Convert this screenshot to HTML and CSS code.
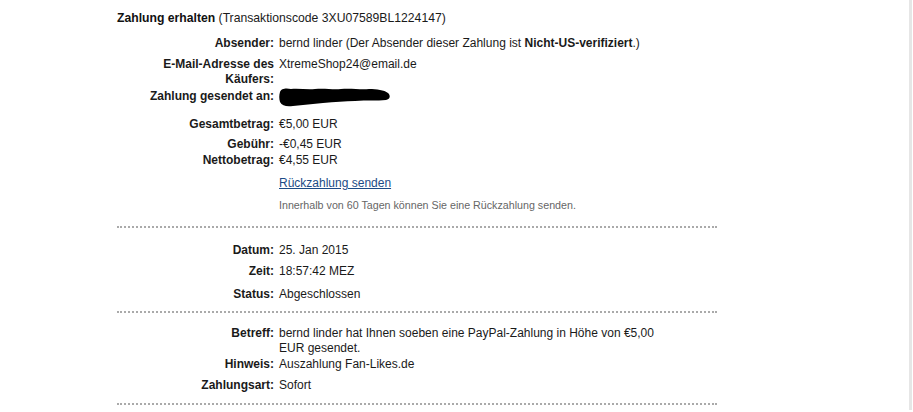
FILE: index.html
```html
<!DOCTYPE html>
<html lang="de">
<head>
<meta charset="utf-8">
<title>Zahlung erhalten</title>
<link rel="stylesheet" href="styles.css">
</head>
<body>
<div class="page">
  <div class="content">
    <h1 class="title"><b>Zahlung erhalten</b> (Transaktionscode 3XU07589BL1224147)</h1>

    <div class="grid sec1">
      <div class="lbl">Absender:</div>
      <div class="val">bernd linder (Der Absender dieser Zahlung ist <b>Nicht-US-verifiziert</b>.)</div>

      <div class="lbl r-mail">E-Mail-Adresse des Käufers:</div>
      <div class="val r-mail">XtremeShop24@email.de</div>

      <div class="lbl r-sent">Zahlung gesendet an:</div>
      <div class="val r-sent"><svg class="scribble" width="112" height="20" viewBox="0 0 112 20"><path d="M1 5 C2 1 8 1 12 2 C20 1 28 3 36 2 C46 1 54 3 62 2 C72 1 82 3 90 2 C98 2 105 3 109 6 C112 9 111 12 107 13 C98 14 88 13 76 14 C66 14 56 15 44 16 C34 17 24 18 14 19 C8 20 3 19 1 15 C0 12 0 8 1 5 Z" fill="#000"/></svg></div>

      <div class="lbl r-gap">Gesamtbetrag:</div>
      <div class="val r-gap">€5,00 EUR</div>

      <div class="lbl r-fee">Gebühr:</div>
      <div class="val r-fee">-€0,45 EUR</div>

      <div class="lbl r-net">Nettobetrag:</div>
      <div class="val r-net">€4,55 EUR</div>

      <div class="lbl"></div>
      <div class="val r-link"><a href="#" class="link">Rückzahlung senden</a></div>

      <div class="lbl"></div>
      <div class="val hint">Innerhalb von 60 Tagen können Sie eine Rückzahlung senden.</div>
    </div>

    <div class="sep"></div>

    <div class="grid sec2">
      <div class="lbl">Datum:</div>
      <div class="val">25. Jan 2015</div>

      <div class="lbl r-time">Zeit:</div>
      <div class="val r-time">18:57:42 MEZ</div>

      <div class="lbl r-status">Status:</div>
      <div class="val r-status">Abgeschlossen</div>
    </div>

    <div class="sep"></div>

    <div class="grid sec3">
      <div class="lbl">Betreff:</div>
      <div class="val">bernd linder hat Ihnen soeben eine PayPal-Zahlung in Höhe von €5,00 EUR gesendet.</div>

      <div class="lbl r-hint2">Hinweis:</div>
      <div class="val r-hint2">Auszahlung Fan-Likes.de</div>

      <div class="lbl r-art">Zahlungsart:</div>
      <div class="val r-art">Sofort</div>
    </div>

    <div class="sep"></div>
  </div>
  <div class="edge"></div>
</div>
</body>
</html>
```
FILE: styles.css
```css
html, body {
  margin: 0;
  padding: 0;
  background: #fff;
}
body {
  font-family: "Liberation Sans", Arial, sans-serif;
  font-size: 12px;
  color: #1a1a1a;
  width: 913px;
  height: 412px;
  overflow: hidden;
}
.page {
  display: flex;
  height: 412px;
}
.content {
  width: 600px;
  margin-left: 117px;
  padding-top: 10px;
}
.edge {
  margin-left: auto;
  margin-right: 1px;
  width: 3px;
  height: 410px;
  background: #e6e6e6;
}
.title {
  font-size: 12.2px;
  font-weight: normal;
  margin: 0 0 10px 0;
  line-height: 16px;
  color: #1a1a1a;
}
.title b { color: #111; }
.grid {
  display: grid;
  grid-template-columns: 157px 384px;
  column-gap: 5px;
  line-height: 15px;
}
.lbl {
  text-align: right;
  font-weight: bold;
  color: #1a1a1a;
}
.val {
  color: #1a1a1a;
}
.r-mail { margin-top: 6px; }
.r-mail.lbl { padding-left: 40px; }
.r-sent { margin-top: 2px; }
.scribble { display: block; margin: -2px 0 -3px 0; }
.r-gap { margin-top: 13px; }
.r-fee { margin-top: 5px; }
.r-net { margin-top: 1px; }
.r-link { margin-top: 8px; }
.link {
  color: #1c4b86;
  text-decoration: underline;
}
.hint {
  font-size: 10.7px;
  color: #666;
  margin-top: 7px;
}
.sep {
  height: 0;
  border-top: 2px dotted #aaa;
  width: 600px;
}
.sec1 { margin-bottom: 13px; }
.sec2 { margin-top: 15px; margin-bottom: 9px; }
.r-time { margin-top: 6px; }
.r-status { margin-top: 8px; }
.sec3 { margin-top: 13px; margin-bottom: 10px; }
.r-hint2 { margin-top: 1px; }
.r-art { margin-top: 6px; }
```
